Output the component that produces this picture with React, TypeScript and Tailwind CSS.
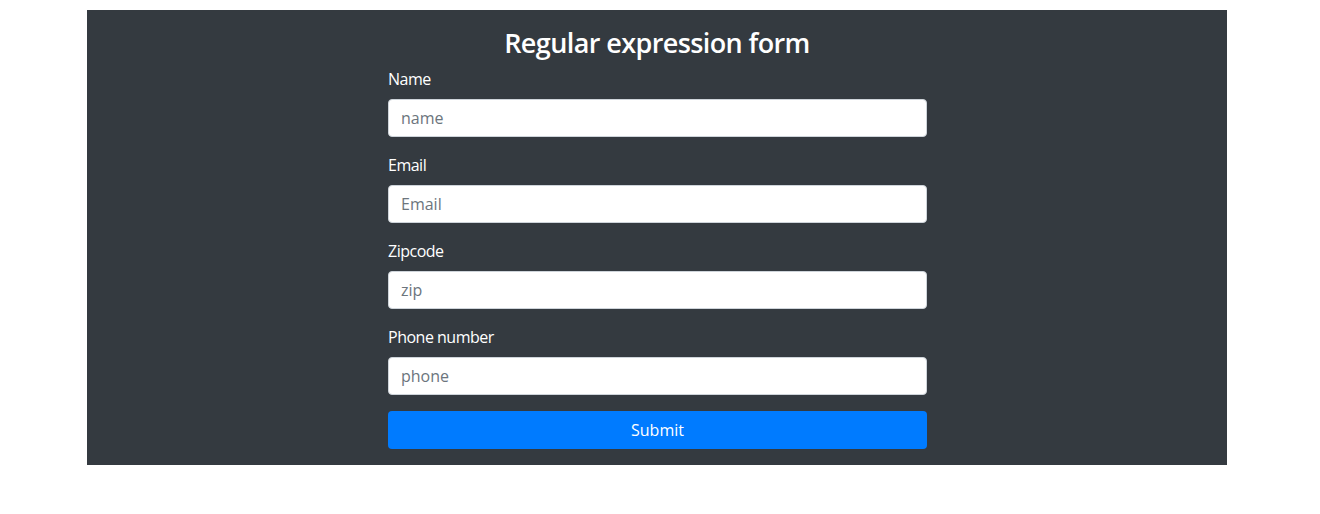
export default function App() {
  const fields = [
    { label: 'Name', placeholder: 'name', type: 'text' },
    { label: 'Email', placeholder: 'Email', type: 'email' },
    { label: 'Zipcode', placeholder: 'zip', type: 'text' },
    { label: 'Phone number', placeholder: 'phone', type: 'text' },
  ];

  return (
    <div className="min-h-screen bg-white pt-[10px] font-['Open_Sans',sans-serif]">
      <div className="ml-[87px] w-[1140px] bg-[#343a40] pt-[17px] pb-[16px] text-white">
        <h3 className="mb-2 h-[32px] text-center text-[27px] leading-[32px] font-semibold tracking-[-0.6px]">Regular expression form</h3>
        <form className="ml-[301px] w-[539px]" onSubmit={(e) => e.preventDefault()}>
          {fields.map((f) => (
            <div key={f.label} className="mb-4">
              <label className="mb-2 block text-base leading-6 tracking-[-0.5px]">{f.label}</label>
              <input
                type={f.type}
                placeholder={f.placeholder}
                className="block h-[38px] w-full rounded border border-[#ced4da] bg-white px-3 py-1.5 text-base text-[#495057] placeholder:text-[#6c757d] outline-none"
              />
            </div>
          ))}
          <button type="submit" className="block h-[38px] w-full rounded bg-[#007bff] text-base text-white">
            Submit
          </button>
        </form>
      </div>
    </div>
  );
}
